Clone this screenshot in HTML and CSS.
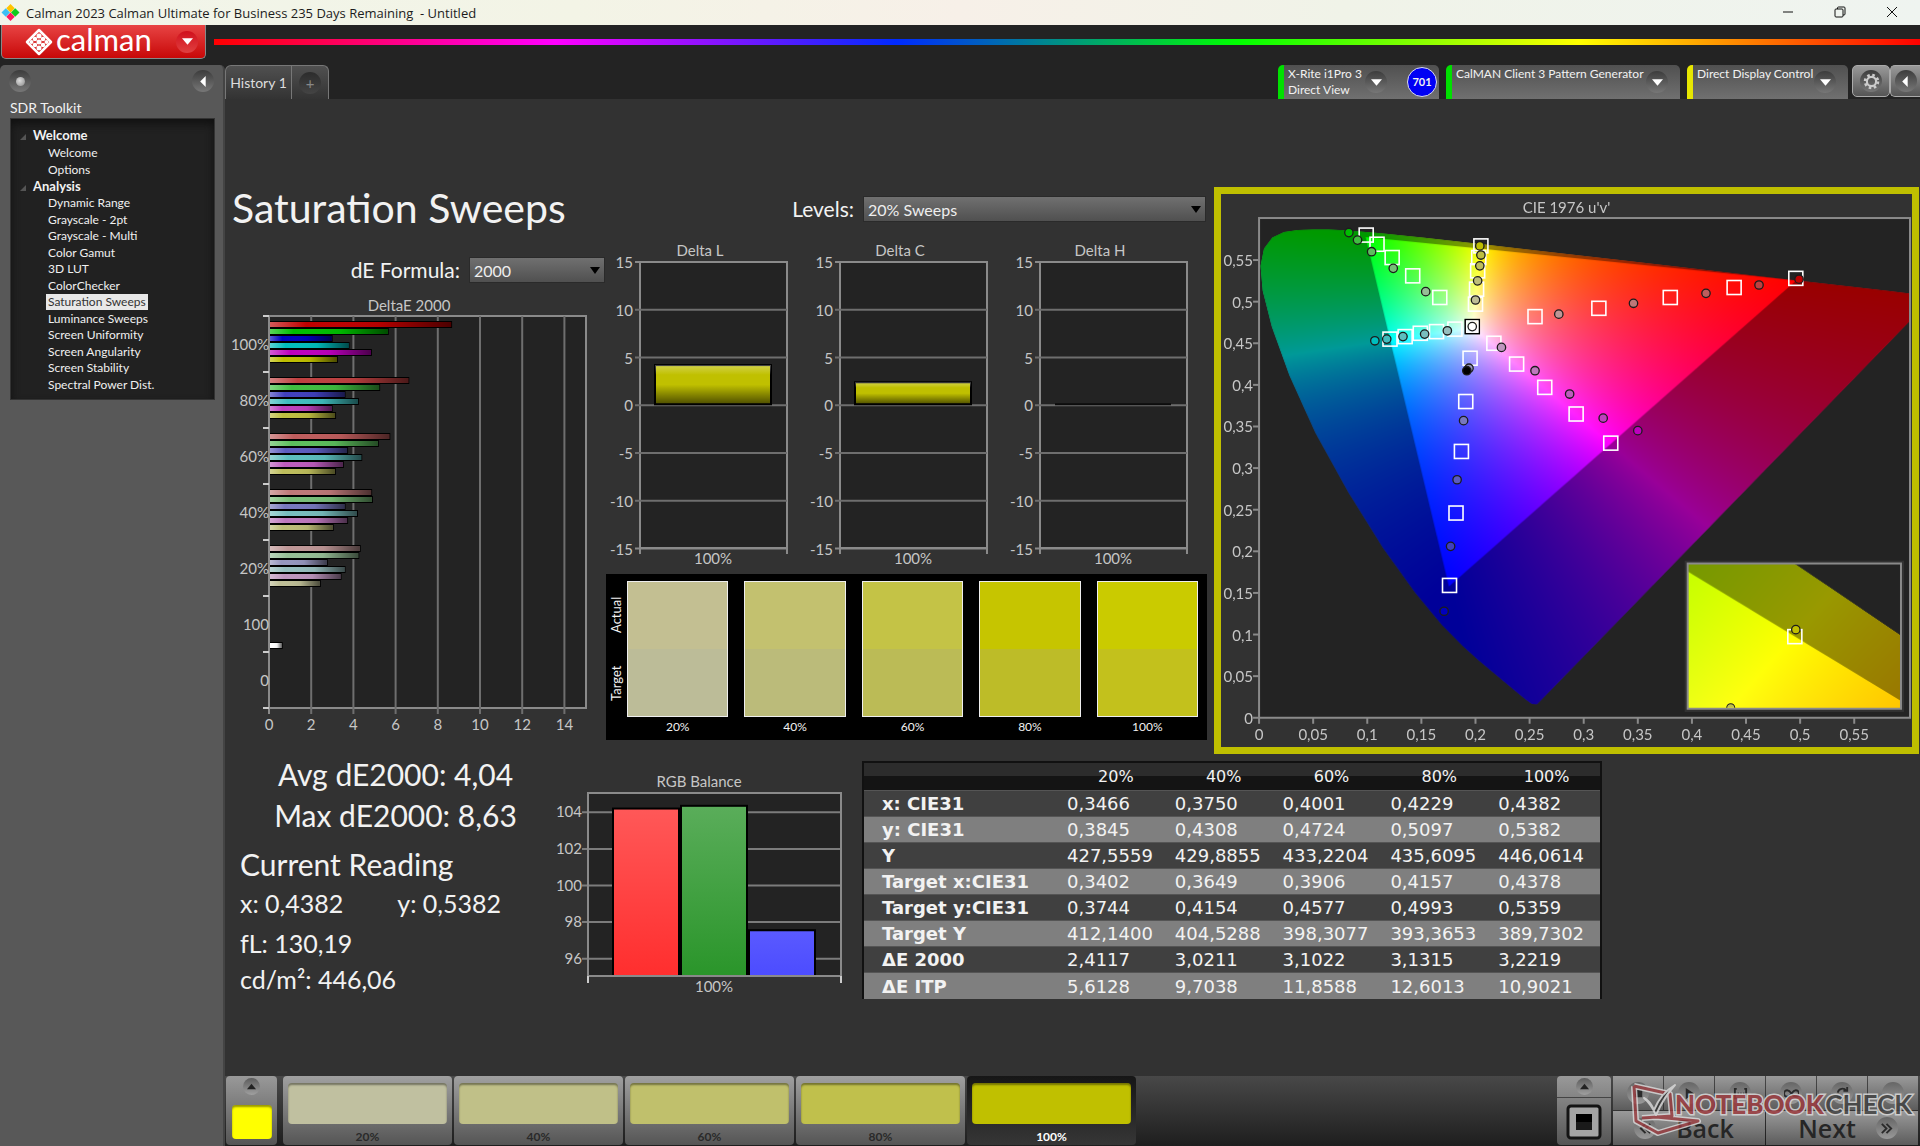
FILE: index.html
```html
<!DOCTYPE html>
<html lang="en">
<head>
    <meta charset="UTF-8">
    <meta name="viewport" content="width=device-width, initial-scale=1.0">
    <title>Calman 2023 - Untitled</title>
    <link rel="stylesheet" href="styles.css">
</head>
<body>

    <!-- Window title bar -->
    <div class="titlebar">
        <svg class="app-icon" viewBox="0 0 20 20">
            <path d="M10 1l4.500 4.500-4.500 4.500-4.500-4.500z" fill="#ffc400"/>
            <path d="M5 5.500l4.500 4.500-4.500 4.500-4.500-4.500z" fill="#3cc0f5"/>
            <path d="M15 5.500l4.500 4.500-4.500 4.500-4.500-4.500z" fill="#12cc1c"/>
            <path d="M10 10l4.500 4.500-4.500 4.500-4.500-4.500z" fill="#ff1a5e"/>
        </svg>
        <span>Calman 2023 Calman Ultimate for Business 235 Days Remaining &nbsp;- Untitled</span>
        <div class="window-buttons">
            <button aria-label="Minimize"><svg viewBox="0 0 12 12"><path d="M1 6h10"/></svg></button>
            <button aria-label="Restore"><svg viewBox="0 0 12 12"><rect x="1" y="3" width="8" height="8" rx="1"/><path d="M3.500 3V2q0-1 1-1H10q1 0 1 1v6q0 1-1 1H9"/></svg></button>
            <button aria-label="Close"><svg viewBox="0 0 12 12"><path d="M1 1l10 10M11 1L1 11"/></svg></button>
        </div>
    </div>

    <div class="header">
        <button class="logo">
            <svg class="logo-mark" viewBox="0 0 28 28">
                <path d="M14 2l12 12-12 12L2 14z" fill="none" stroke="#fff" stroke-width="2.500" stroke-linejoin="round"/>
                <g fill="#fff">
                    <circle cx="14" cy="8" r="2.500"/><circle cx="10" cy="11" r="2.300"/><circle cx="18" cy="11" r="2.300"/>
                    <circle cx="14" cy="14" r="2.500"/><circle cx="10" cy="17" r="2.300"/><circle cx="18" cy="17" r="2.300"/>
                    <circle cx="14" cy="20" r="2.500"/><circle cx="6.500" cy="14" r="2"/><circle cx="21.500" cy="14" r="2"/>
                </g>
            </svg>
            <span>calman</span>
            <i class="round red"><svg viewBox="0 0 10 10"><path d="M0 2h10L5 8z"/></svg></i>
        </button>
        <div class="rainbow"></div>
    </div>

    <div class="main">
        <!-- Workflow navigation -->
        <aside class="sidebar">
            <div class="sidebar-top">
                <button class="round" aria-label="Record"><i class="dot"></i></button>
                <button class="round" aria-label="Collapse"><svg viewBox="0 0 10 10"><path d="M7 0v10L2 5z"/></svg></button>
            </div>
            <h2>SDR Toolkit</h2>
            <nav class="tree">
                <h3>Welcome</h3>
                <ul class="two">
                    <li><a href="#">Welcome</a></li>
                    <li><a href="#">Options</a></li>
                </ul>
                <h3>Analysis</h3>
                <ul class="twelve">
                    <li><a href="#">Dynamic Range</a></li>
                    <li><a href="#">Grayscale - 2pt</a></li>
                    <li><a href="#">Grayscale - Multi</a></li>
                    <li><a href="#">Color Gamut</a></li>
                    <li><a href="#">3D LUT</a></li>
                    <li><a href="#">ColorChecker</a></li>
                    <li><a href="#" class="selected">Saturation Sweeps</a></li>
                    <li><a href="#">Luminance Sweeps</a></li>
                    <li><a href="#">Screen Uniformity</a></li>
                    <li><a href="#">Screen Angularity</a></li>
                    <li><a href="#">Screen Stability</a></li>
                    <li><a href="#">Spectral Power Dist.</a></li>
                </ul>
            </nav>
        </aside>

        <div class="workspace">
            <div class="topbar">
                <div class="tabs">
                    <button class="tab">History 1</button>
                    <button class="tab add" aria-label="Add tab"><i class="round dark">+</i></button>
                </div>
                <div class="devices">
                    <div class="device green meter">
                        <span>X-Rite i1Pro 3<br>Direct View</span>
                        <button class="round" aria-label="Meter menu"><svg viewBox="0 0 10 10"><path d="M0 2h10L5 8z"/></svg></button>
                        <b class="badge">701</b>
                    </div>
                    <div class="device green source">
                        <span>CalMAN Client 3 Pattern Generator</span>
                        <button class="round" aria-label="Source menu"><svg viewBox="0 0 10 10"><path d="M0 2h10L5 8z"/></svg></button>
                    </div>
                    <div class="device yellow display">
                        <span>Direct Display Control</span>
                        <button class="round" aria-label="Display menu"><svg viewBox="0 0 10 10"><path d="M0 2h10L5 8z"/></svg></button>
                    </div>
                    <button class="tool" aria-label="Settings">
                        <i class="round"><svg class="gear" viewBox="0 0 24 24">
                            <circle cx="12" cy="12" r="9" stroke-width="4" stroke-dasharray="3.500 3.570"/>
                            <circle cx="12" cy="12" r="6.500" stroke-width="3"/>
                        </svg></i>
                    </button>
                    <button class="tool last" aria-label="Collapse devices"><i class="round"><svg viewBox="0 0 10 10"><path d="M7 0v10L2 5z"/></svg></i></button>
                </div>
            </div>

            <div class="content">
                <div class="row upper">
                    <section class="col-de">
                        <h1>Saturation Sweeps</h1>
                        <div class="field formula">
                            <label for="formula">dE Formula:</label>
                            <div class="select"><select id="formula"><option>2000</option></select></div>
                        </div>
                        <svg id="deltaE" class="chart" viewBox="0 0 380 450"></svg>
                    </section>

                    <section class="col-mid">
                        <div class="field levels">
                            <label for="levels">Levels:</label>
                            <div class="select"><select id="levels"><option>20% Sweeps</option></select></div>
                        </div>
                        <div class="deltas">
                            <svg id="deltaL" class="chart" viewBox="0 0 200 333"></svg>
                            <svg id="deltaC" class="chart" viewBox="0 0 200 333"></svg>
                            <svg id="deltaH" class="chart" viewBox="0 0 200 333"></svg>
                        </div>
                        <div class="swatches">
                            <div class="sides"><span>Actual</span><span>Target</span></div>
                            <figure><div class="s20"></div><figcaption>20%</figcaption></figure>
                            <figure><div class="s40"></div><figcaption>40%</figcaption></figure>
                            <figure><div class="s60"></div><figcaption>60%</figcaption></figure>
                            <figure><div class="s80"></div><figcaption>80%</figcaption></figure>
                            <figure><div class="s100"></div><figcaption>100%</figcaption></figure>
                        </div>
                    </section>

                    <section class="cie">
                        <canvas id="gamut" width="690" height="552"></canvas>
                        <svg id="cie" class="chart" viewBox="0 0 690 552"></svg>
                    </section>
                </div>

                <div class="row lower">
                    <section class="readings">
                        <div class="stats">
                            <p>Avg dE2000: 4,04</p>
                            <p>Max dE2000: 8,63</p>
                        </div>
                        <h2>Current Reading</h2>
                        <div class="xy"><span>x: 0,4382</span><span>y: 0,5382</span></div>
                        <p class="value">fL: 130,19</p>
                        <p class="value">cd/m²: 446,06</p>
                    </section>

                    <section class="balance">
                        <svg id="rgb" class="chart" viewBox="0 0 314 240"></svg>
                    </section>

                    <section class="table-box">
                        <table>
                            <thead>
                                <tr><th></th><th>20%</th><th>40%</th><th>60%</th><th>80%</th><th>100%</th></tr>
                            </thead>
                            <tbody>
                                <tr><th>x: CIE31</th><td>0,3466</td><td>0,3750</td><td>0,4001</td><td>0,4229</td><td>0,4382</td></tr>
                                <tr><th>y: CIE31</th><td>0,3845</td><td>0,4308</td><td>0,4724</td><td>0,5097</td><td>0,5382</td></tr>
                                <tr><th>Y</th><td>427,5559</td><td>429,8855</td><td>433,2204</td><td>435,6095</td><td>446,0614</td></tr>
                                <tr><th>Target x:CIE31</th><td>0,3402</td><td>0,3649</td><td>0,3906</td><td>0,4157</td><td>0,4378</td></tr>
                                <tr><th>Target y:CIE31</th><td>0,3744</td><td>0,4154</td><td>0,4577</td><td>0,4993</td><td>0,5359</td></tr>
                                <tr><th>Target Y</th><td>412,1400</td><td>404,5288</td><td>398,3077</td><td>393,3653</td><td>389,7302</td></tr>
                                <tr><th>ΔE 2000</th><td>2,4117</td><td>3,0211</td><td>3,1022</td><td>3,1315</td><td>3,2219</td></tr>
                                <tr><th>ΔE ITP</th><td>5,6128</td><td>9,7038</td><td>11,8588</td><td>12,6013</td><td>10,9021</td></tr>
                            </tbody>
                        </table>
                    </section>
                </div>
            </div>

            <!-- Pattern buttons and read controls -->
            <div class="footer">
                <button class="current" aria-label="Current pattern">
                    <i class="round up"><svg viewBox="0 0 10 10"><path d="M0 8h10L5 2z"/></svg></i>
                    <span class="fill"></span>
                </button>
                <button class="pattern"><span class="fill p20"></span>20%</button>
                <button class="pattern"><span class="fill p40"></span>40%</button>
                <button class="pattern"><span class="fill p60"></span>60%</button>
                <button class="pattern"><span class="fill p80"></span>80%</button>
                <button class="pattern active"><span class="fill p100"></span>100%</button>

                <div class="controls">
                    <div class="stop-box">
                        <button class="stop-up" aria-label="Expand"><i class="round up"><svg viewBox="0 0 10 10"><path d="M0 8h10L5 2z"/></svg></i></button>
                        <button class="stop" aria-label="Stop">
                            <svg viewBox="0 0 36 36"><rect x="2" y="2" width="32" height="32" rx="3" fill="#a4a4a4" stroke="#141414" stroke-width="3"/><rect x="10" y="10" width="16" height="16" fill="#000"/><path d="M10 18h16v8H10z" fill="#1a1a1a"/></svg>
                        </button>
                    </div>
                    <div class="transport">
                        <button aria-label="Read"><i class="round"><svg viewBox="0 0 16 16"><path d="M4 4h8v8H4z"/></svg></i></button>
                        <button aria-label="Play"><i class="round"><svg viewBox="0 0 16 16"><path d="M4 2l9 6-9 6z"/></svg></i></button>
                        <button aria-label="Range"><i class="round"><svg viewBox="0 0 16 16"><path class="line" d="M4 3H2v10h2M12 3h2v10h-2M5 8h1M8 8h1M11 8h1"/></svg></i></button>
                        <button aria-label="Continuous"><i class="round"><svg viewBox="0 0 16 16"><path class="line" d="M8 8C6 5 5 4.500 3.500 4.500a3.500 3.500 0 0 0 0 7C5 11.500 6 11 8 8s3-3.500 4.500-3.500a3.500 3.500 0 0 1 0 7C11 11.500 10 11 8 8z"/></svg></i></button>
                        <button aria-label="Refresh"><i class="round"><svg viewBox="0 0 16 16"><path class="line" d="M3 7a5 5 0 0 1 9-2M13 9a5 5 0 0 1-9 2M13 1v4H9M3 15v-4h4"/></svg></i></button>
                        <button aria-label="More"><i class="round"></i></button>
                        <button class="nav-button"><i class="round"><svg viewBox="0 0 16 16"><path class="line" d="M8 3L3 8l5 5M13 3L8 8l5 5"/></svg></i>Back</button>
                        <button class="nav-button next">Next<i class="round"><svg viewBox="0 0 16 16"><path class="line" d="M3 3l5 5-5 5M8 3l5 5-5 5"/></svg></i></button>
                    </div>
                    <svg class="watermark" viewBox="0 0 290 58">
                        <g fill="none" stroke-linejoin="round" opacity=".8">
                            <path d="M6 5L8 40 30 52 70 40 28 36M6 5L42 13 44 35 14 37" stroke="#ddd" stroke-width="6"/>
                            <path d="M6 5L8 40 30 52 70 40 28 36M6 5L42 13 44 35 14 37" stroke="#9c3c40" stroke-width="3"/>
                            <path d="M16 17Q22 20 26 29 33 12 47 4 36 16 28 34 23 23 16 17z" stroke="#ddd" stroke-width="2" fill="#333"/>
                        </g>
                        <text x="47" y="33" class="wm-red">NOTEBOOK</text>
                        <text x="284" y="33" text-anchor="end" class="wm-gray">CHECK</text>
                    </svg>
                </div>
            </div>
        </div>
    </div>

    <script src="app.js"></script>
</body>
</html>
```

FILE: styles.css
```css
* {
    box-sizing: border-box;
}

body {
    margin: 0;
    min-height: 100vh;
    display: flex;
    flex-direction: column;
    background: #232323;
    color: #f2f2f2;
    font-family: Lato, "Liberation Sans", sans-serif;
    font-size: 12px;
}

h1, h2, h3, p, ul, figure {
    margin: 0;
    padding: 0;
    font-weight: normal;
}

button {
    border: 0;
    padding: 0;
    margin: 0;
    background: none;
    color: inherit;
    font: inherit;
}

/* Title bar */
.titlebar {
    display: flex;
    align-items: center;
    height: 25px;
    padding-left: 1px;
    background: linear-gradient(90deg, #f1f5ea, #f3f4e6 30%, #f7f0e8 50%, #f0f3e8 70%, #eff4f0);
    color: #1c1c1c;
    font-family: "Open Sans", sans-serif;
    font-size: 13px;
}

.app-icon {
    width: 19px;
    height: 19px;
    margin-right: 6px;
}

.window-buttons {
    display: flex;
    margin-left: auto;
    padding-right: 2px;
}

.window-buttons button {
    width: 52px;
    height: 24px;
}

.window-buttons svg {
    width: 12px;
    height: 12px;
    fill: none;
    stroke: #111;
}

/* Logo and rainbow */
.header {
    display: flex;
    align-items: flex-start;
    height: 40px;
    padding-left: 1px;
    gap: 8px;
}

.logo {
    display: flex;
    align-items: center;
    width: 205px;
    height: 34px;
    padding: 0 7px 0 23px;
    border: 1px solid #888;
    border-top: 0;
    border-radius: 0 0 5px 5px;
    background: linear-gradient(#e84444, #c80808);
    color: #fff;
    font-size: 31px;
    line-height: 30px;
}

.logo span {
    margin-top: -6px;
}

.logo-mark {
    width: 28px;
    height: 28px;
    margin-right: 3px;
}

.logo .round {
    margin-left: auto;
}

.rainbow {
    flex: 1;
    height: 6px;
    margin-top: 14px;
    background: linear-gradient(90deg, #f00, #f0f 20%, #002aff 40%, #0f0 60%, #ff0 80%, #f00);
}

/* Small round buttons */
.round {
    display: flex;
    align-items: center;
    justify-content: center;
    flex: none;
    width: 22px;
    height: 22px;
    border-radius: 50%;
    background: linear-gradient(#3c3c3c, #777);
    font-style: normal;
}

.round svg {
    width: 11px;
    height: 11px;
    fill: #fff;
}

.round.red {
    background: linear-gradient(#d0101c, #e04040);
}

.round.dark {
    background: linear-gradient(#2c2c2c, #444);
    color: #888;
    font-size: 15px;
}

.round.up {
    width: 17px;
    height: 17px;
    background: linear-gradient(#5c5c5c, #a0a0a0);
}

.round.up svg {
    width: 9px;
    height: 9px;
    fill: #222;
}

.dot {
    width: 9px;
    height: 9px;
    border-radius: 50%;
    background: radial-gradient(circle at 40% 40%, #ddd, #888);
}

/* Sidebar */
.main {
    flex: 1;
    display: flex;
}

.sidebar {
    width: 225px;
    flex: none;
    border-radius: 5px 5px 0 0;
    border-right: 2px solid #444;
    background: #585858;
}

.sidebar-top {
    display: flex;
    justify-content: space-between;
    padding: 5px 9px 0 9px;
}

.sidebar h2 {
    padding: 6px 10px 0;
    font-size: 14px;
    line-height: 20px;
}

.tree {
    margin: 0 8px 0 10px;
    height: 282px;
    padding: 8px 0 0 22px;
    border: 1px solid #333;
    background: #212121;
    box-shadow: inset 0 5px 8px #111;
}

.tree h3 {
    position: relative;
    font-size: 13px;
    font-weight: bold;
    line-height: 17px;
}

.tree h3::before {
    content: "";
    position: absolute;
    left: -13px;
    top: 7px;
    border: 3px solid transparent;
    border-right-color: #555;
    border-bottom-color: #555;
}

.tree ul {
    display: grid;
    grid-auto-rows: 1fr;
    list-style: none;
    padding-left: 13px;
}

.tree .two {
    height: 34px;
}

.tree .twelve {
    height: 198px;
}

.tree li {
    display: flex;
    align-items: center;
}

.tree a {
    padding: 0 2px;
    color: #f0f0f0;
    line-height: 16px;
    text-decoration: none;
}

.tree a.selected {
    background: #e8e8e8;
    color: #333;
}

/* Tabs and devices */
.workspace {
    flex: 1;
    min-width: 0;
    display: flex;
    flex-direction: column;
    background: #323232;
}

.topbar {
    display: flex;
    justify-content: space-between;
    height: 34px;
    background: #232323;
}

.tabs {
    display: flex;
    border: 1px solid #777;
    border-bottom: 0;
    border-radius: 6px 6px 0 0;
    background: linear-gradient(#505050, #333);
}

.tab {
    width: 65px;
    color: #ddd;
    font-size: 14px;
    white-space: nowrap;
}

.tab.add {
    display: flex;
    align-items: center;
    justify-content: center;
    width: 37px;
    border-left: 1px solid #777;
}

.devices {
    display: flex;
}

.device {
    display: flex;
    margin-right: 7px;
    padding: 1px 12px 0 4px;
    border-left: 6px solid #00e000;
    border-radius: 5px 5px 0 0;
    background: linear-gradient(#505050, #707070);
    line-height: 16px;
    white-space: nowrap;
}

.device.yellow {
    margin-right: 4px;
    border-left-color: #e6e600;
}

.device .round {
    margin: 5px 0 0 auto;
}

.meter {
    width: 161px;
    padding-right: 2px;
}

.source {
    width: 234px;
}

.display {
    width: 161px;
}

.badge {
    display: flex;
    align-items: center;
    justify-content: center;
    width: 30px;
    height: 30px;
    margin: 1px 0 0 20px;
    border: 1px solid #dde;
    border-radius: 50%;
    background: #0000f4;
    font-size: 11px;
}

.tool {
    display: flex;
    align-items: center;
    justify-content: center;
    width: 38px;
    height: 32px;
    border: 1px solid #aaa;
    border-radius: 5px;
    background: linear-gradient(#999, #555);
}

.tool.last {
    width: 30px;
    border-right: 0;
    border-radius: 5px 0 0 5px;
}

.tool .gear {
    width: 17px;
    height: 17px;
    fill: none;
    stroke: #ccc;
}

/* Content */
.content {
    flex: 1;
    padding: 88px 1px 0 0;
}

.row {
    display: grid;
}

.upper {
    grid-template-columns: 380fr 609fr 705fr;
}

.lower {
    grid-template-columns: 316fr 321fr 740fr 317fr;
}

.row > section {
    min-width: 0;
}

.chart {
    display: block;
    width: 100%;
}

.chart text {
    fill: #c6c6c6;
    font-size: 15px;
}

h1 {
    padding-left: 7px;
    font-size: 41px;
    line-height: 42px;
    white-space: nowrap;
}

.field {
    display: flex;
    align-items: center;
    justify-content: flex-end;
    gap: 9px;
    font-size: 21px;
    line-height: 26px;
}

.formula {
    margin: 28px 0 7px;
}

.formula .select {
    width: 136px;
}

.levels {
    margin: 9px 8px 15px 0;
}

.levels .select {
    width: 343px;
}

.select {
    position: relative;
}

.select::after {
    content: "";
    position: absolute;
    right: 5px;
    top: 10px;
    border: 5px solid transparent;
    border-top: 7px solid #000;
    border-bottom: 0;
}

select {
    appearance: none;
    display: block;
    width: 100%;
    height: 26px;
    padding: 0 4px;
    border: 1px solid #2a2a2a;
    border-radius: 0;
    background: linear-gradient(#707070, #505050);
    color: #eee;
    font-family: inherit;
    font-size: 16px;
}

.deltas {
    display: grid;
    grid-template-columns: repeat(3, 1fr);
    margin-right: 9px;
}

.swatches {
    display: flex;
    gap: 16px;
    margin: 4px 7px 0 1px;
    padding: 7px 9px 0 0;
    height: 166px;
    background: #000;
    font-size: 12px;
    text-align: center;
}

.swatches figure {
    flex: 1;
}

.swatches figure div {
    height: 136px;
    margin-bottom: 2px;
    border: 1px solid #eee;
}

.sides {
    display: flex;
    justify-content: space-around;
    width: 21px;
    height: 136px;
    margin-right: -16px;
    writing-mode: vertical-rl;
    transform: rotate(180deg);
    flex-direction: row-reverse;
    font-size: 13px;
    line-height: 20px;
}

.s20 { background: linear-gradient(#c3bf92 50%, #bcbc98 50%); }
.s40 { background: linear-gradient(#c3c16f 50%, #bbbb7a 50%); }
.s60 { background: linear-gradient(#c4c346 50%, #bbbb56 50%); }
.s80 { background: linear-gradient(#c6c500 50%, #bdbc28 50%); }
.s100 { background: linear-gradient(#cacb00 50%, #c3c11c 50%); }

/* CIE diagram, canvas under the svg */
.cie {
    display: grid;
    align-self: start;
    border: 7px solid #bfbf00;
}

.cie canvas,
.cie svg {
    grid-area: 1 / 1;
    width: 100%;
}

/* Readings */
.readings {
    padding: 0 0 0 15px;
    font-size: 25px;
    line-height: 36px;
    white-space: nowrap;
}

.stats {
    padding: 0 0 7px 10px;
    text-align: center;
    font-size: 30px;
    line-height: 41px;
}

.readings h2 {
    font-size: 30px;
    line-height: 42px;
}

.xy {
    display: flex;
    gap: 54px;
    padding-bottom: 4px;
}

.balance {
    padding-right: 7px;
}

/* Table */
.table-box {
    padding: 7px 0 0;
}

table {
    width: 100%;
    table-layout: fixed;
    border-collapse: collapse;
    border: 2px solid #111;
    border-bottom: 0;
    font-family: "DejaVu Sans", sans-serif;
    font-size: 18px;
    line-height: 25px;
    white-space: nowrap;
}

th, td {
    padding: 0 0 0 5px;
    text-align: left;
    font-weight: normal;
}

th:first-child {
    width: 199px;
    padding-left: 18px;
    font-weight: bold;
}

thead th {
    height: 29px;
    padding: 0;
    text-align: center;
    font-size: 16px;
}

thead tr {
    background: linear-gradient(#2c2c2c 50%, #141414 50%);
}

tbody tr {
    height: 26px;
    border-top: 1px solid #555;
    background: #404040;
}

tbody tr:nth-child(even) {
    background: #7f7f7f;
}

/* Footer */
.footer {
    display: flex;
    height: 70px;
    padding: 0 2px 1px 1px;
    gap: 2px;
    background: linear-gradient(#484848, #1e1e1e);
}

.current {
    display: flex;
    flex-direction: column;
    align-items: center;
    justify-content: space-between;
    width: 51px;
    margin-right: 4px;
    padding: 2px 5px 6px;
    border-radius: 4px;
    background: linear-gradient(#999, #555);
}

.fill {
    display: block;
    border-radius: 4px;
    box-shadow: inset 0 2px 2px rgba(0, 0, 0, 0.4);
}

.current .fill {
    width: 40px;
    height: 34px;
    background: #ff0;
}

.pattern {
    width: 169px;
    padding: 5px 5px 0;
    border-radius: 4px;
    background: linear-gradient(#a0a0a0, #555);
    color: #2a2a2a;
    font-size: 12px;
    font-weight: bold;
}

.pattern .fill {
    height: 41px;
    margin-bottom: 5px;
}

.pattern.active {
    background: linear-gradient(#161616, #363636);
    color: #fff;
}

.p20 { background: #c0c0a0; }
.p40 { background: #c0c088; }
.p60 { background: #c0c06c; }
.p80 { background: #c0c04c; }
.p100 { background: #c0c000; }

.controls {
    position: relative;
    display: flex;
    margin-left: auto;
    gap: 2px;
}

.stop-box {
    width: 54px;
    border-radius: 4px;
    background: linear-gradient(#999, #555);
}

.stop-box button {
    display: flex;
    align-items: center;
    justify-content: center;
    width: 100%;
    height: 21px;
}

.stop-box .stop {
    height: 48px;
    border-top: 1px solid #444;
}

.stop svg {
    width: 36px;
    height: 36px;
}

.transport {
    display: grid;
    grid-template-columns: repeat(6, 50px);
    grid-template-rows: 34px 34px;
    gap: 1px;
}

.transport button {
    display: flex;
    align-items: center;
    justify-content: center;
    background: linear-gradient(#9a9a9a, #5c5c5c);
}

.transport svg {
    width: 15px;
    height: 15px;
    fill: #2a2a2a;
}

.transport .round {
    background: linear-gradient(#666, #999);
}

.transport .line {
    fill: none;
    stroke: #2a2a2a;
    stroke-width: 2;
}

.transport .nav-button {
    grid-column: span 3;
    gap: 20px;
    padding-right: 10px;
    color: #262626;
    font-family: "Open Sans", sans-serif;
    font-size: 25px;
    font-weight: 600;
    line-height: 34px;
}

.transport .next {
    padding: 0 0 0 12px;
}

.watermark {
    position: absolute;
    right: 0;
    top: 5px;
    width: 290px;
    height: 58px;
}

.watermark text {
    font-size: 26px;
    font-weight: 900;
    stroke: #d8d8d8;
    stroke-width: 3;
    paint-order: stroke;
    opacity: 0.85;
}

.watermark .wm-red {
    fill: #9c3c40;
}

.watermark .wm-gray {
    fill: #444;
    font-weight: bold;
}
```

FILE: app.js
```javascript
const NS = 'http://www.w3.org/2000/svg';
const GRID = '#8a8a8a';

// Append an svg element with attributes and optional text
function add(parent, tag, attrs, text) {
    const el = document.createElementNS(NS, tag);
    for (const key in attrs) el.setAttribute(key, attrs[key]);
    if (text !== undefined) el.textContent = text;
    parent.appendChild(el);
    return el;
}

function line(svg, x1, y1, x2, y2, color) {
    add(svg, 'line', { x1, y1, x2, y2, stroke: color || GRID, 'stroke-width': 2 });
}

function label(svg, x, y, text, anchor) {
    add(svg, 'text', { x, y, 'text-anchor': anchor || 'middle' }, text);
}

function gradient(svg, id, vertical, stops) {
    const g = add(svg, 'linearGradient', vertical ? { id, x2: 0, y2: 1 } : { id });
    stops.forEach(s => add(g, 'stop', { offset: s[0], 'stop-color': s[1], 'stop-opacity': s[2] }));
}

const LEVELS = ['100%', '80%', '60%', '40%', '20%'];
const LOW = [0, 64, 92, 120, 150];

// Colour of one hue at a saturation level
function shade(mask, level) {
    return 'rgb(' + [...mask].map(c => c === '1' ? 190 : LOW[level]).join(',') + ')';
}

const HUES = ['100', '010', '001', '011', '101', '110'];

// DeltaE bars per saturation level, in the order of HUES
function drawDeltaE() {
    const svg = document.getElementById('deltaE');
    const data = [
        [8.63, 5.63, 2.97, 3.77, 4.83, 3.22],
        [6.6, 5.22, 3.58, 4.21, 2.97, 3.13],
        [5.7, 5.16, 3.7, 4.37, 3.5, 3.12],
        [4.84, 4.88, 3.58, 4.17, 3.7, 3.02],
        [4.3, 4.23, 2.74, 3.58, 3.39, 2.41]
    ];
    const left = 44, top = 26, unit = 21.1, step = 56;
    gradient(svg, 'barShade', false, [[0, '#fff', 0.35], [0.2, '#fff', 0], [0.6, '#000', 0.05], [1, '#000', 0.6]]);
    label(svg, 184, 21, 'DeltaE 2000');
    add(svg, 'rect', { x: left, y: top, width: 317, height: 392, fill: '#232323', stroke: GRID, 'stroke-width': 2 });
    for (let v = 0; v <= 14; v += 2) {
        const x = left + v * unit;
        line(svg, x, top, x, top + 398, v ? '#6e6e6e' : GRID);
        label(svg, x, 440, v);
    }
    [...LEVELS, '100', '0'].forEach((t, i) => {
        label(svg, left, top + 34 + i * step, t, 'end');
        line(svg, left - 6, top + i * step, left, top + i * step, '#ccc');
    });
    line(svg, left - 6, top + 392, left, top + 392, '#ccc');
    const bar = (y, value, fill) => {
        add(svg, 'rect', { x: left + 1, y, width: value * unit, height: 7, fill: '#000' });
        const box = { x: left + 1, y: y + 1, width: value * unit - 1, height: 5 };
        add(svg, 'rect', { ...box, fill });
        add(svg, 'rect', { ...box, fill: 'url(#barShade)' });
    };
    data.forEach((row, i) => row.forEach((v, j) => bar(top + 5 + i * step + j * 7, v, shade(HUES[j], i))));
    bar(top + 326, 0.6, '#fff');
}

function drawDelta(id, title, value) {
    const svg = document.getElementById(id);
    const left = 35, top = 25, width = 147, unit = 9.55;
    gradient(svg, id + 'Shade', true, [[0, '#fff', 0.3], [0.25, '#fff', 0], [0.5, '#000', 0], [1, '#000', 0.6]]);
    label(svg, 95, 19, title);
    label(svg, 108, 327, '100%');
    add(svg, 'rect', { x: left, y: top, width, height: 286, fill: '#232323', stroke: GRID, 'stroke-width': 2 });
    for (let v = 15; v >= -15; v -= 5) {
        const y = top + (15 - v) * unit;
        line(svg, left - 5, y, left + width, y, Math.abs(v) === 15 ? GRID : '#6e6e6e');
        label(svg, left - 7, y + 6, v, 'end');
    }
    line(svg, left, 311, left, 317);
    line(svg, left + width, 311, left + width, 317);
    const h = value * unit;
    const box = { x: left + 15, y: top + 15 * unit - h - 1, width: 116, height: h };
    if (h < 1) {
        line(svg, box.x, box.y, box.x + box.width, box.y, '#0c0c0c');
        return;
    }
    add(svg, 'rect', { ...box, fill: '#c0c000', stroke: '#000', 'stroke-width': 2 });
    add(svg, 'rect', { ...box, fill: `url(#${id}Shade)` });
}

function drawRgb() {
    const svg = document.getElementById('rgb');
    const left = 47, top = 39, unit = 18.3;
    label(svg, 158, 33, 'RGB Balance');
    label(svg, 173, 238, '100%');
    add(svg, 'rect', { x: left, y: top, width: 253, height: 183, fill: '#232323' });
    for (let v = 104; v >= 96; v -= 2) {
        const y = top + (105 - v) * unit + 1;
        line(svg, left - 6, y, left + 253, y, '#7c7c7c');
        label(svg, left - 6, y + 5, v, 'end');
    }
    const bars = [[104.15, '#ff5858', '#ff2e2e'], [104.3, '#5aad5a', '#2a952a'], [97.5, '#5a5aff', '#4c4cff']];
    bars.forEach(([v, c1, c2], i) => {
        gradient(svg, 'rgb' + i, true, [[0, c1, 1], [1, c2, 1]]);
        const h = (v - 95) * unit;
        add(svg, 'rect', { x: 72 + i * 68, y: top + 183 - h, width: 66, height: h, fill: `url(#rgb${i})`, stroke: '#000', 'stroke-width': 2 });
    });
    add(svg, 'rect', { x: left, y: top, width: 253, height: 183, fill: 'none', stroke: GRID, 'stroke-width': 2 });
    line(svg, left, 222, left, 229, '#ccc');
    line(svg, left + 253, 222, left + 253, 229, '#ccc');
}

// CIE 1931 spectral locus (x, y)
const LOCUS = [
    [.1741, .0050], [.1714, .0051], [.1689, .0069], [.1644, .0109], [.1611, .0138], [.1566, .0177],
    [.1510, .0227], [.1440, .0297], [.1355, .0399], [.1241, .0578], [.1096, .0868], [.0913, .1327],
    [.0687, .2007], [.0454, .2950], [.0235, .4127], [.0082, .5384], [.0039, .6548], [.0139, .7502],
    [.0389, .8120], [.0743, .8338], [.1142, .8262], [.1547, .8059], [.1929, .7816], [.2296, .7543],
    [.3016, .6923], [.3731, .6245], [.4441, .5547], [.5125, .4866], [.5752, .4242], [.6270, .3725],
    [.6658, .3340], [.6915, .3083], [.7190, .2809], [.7347, .2653]
];
const P3 = [[.680, .320], [.265, .690], [.150, .060]];

function toUv([x, y]) {
    const d = -2 * x + 12 * y + 3;
    return [4 * x / d, 9 * y / d];
}

function toXy([u, v]) {
    const d = 6 * u - 16 * v + 12;
    return [9 * u / d, 4 * v / d];
}

// Brightest display colour of a chromaticity
function colorAt([x, y]) {
    const X = x / y, Z = (1 - x - y) / y;
    const rgb = [
        2.4935 * X - 0.9314 - 0.4027 * Z,
        -0.8295 * X + 1.7627 + 0.0236 * Z,
        0.0358 * X - 0.0762 + 0.9569 * Z
    ].map(c => Math.max(c, 0));
    const max = Math.max(...rgb);
    return rgb.map(c => 255 * c / max);
}

// box is the plot on the canvas, view the chromaticity range it shows
function paintGamut(ctx, box, view, isUv) {
    const w = box.w, h = box.h;
    const image = new ImageData(w, h);
    for (let j = 0; j < h; j++) {
        for (let i = 0; i < w; i++) {
            const p = [view.x + (i + 0.5) / w * view.w, view.y + (1 - (j + 0.5) / h) * view.h];
            const c = colorAt(isUv ? toXy(p) : p);
            image.data.set([c[0], c[1], c[2], 255], (j * w + i) * 4);
        }
    }
    const layer = document.createElement('canvas');
    layer.width = w;
    layer.height = h;
    layer.getContext('2d').putImageData(image, 0, 0);

    const trace = (path, points) => {
        points.forEach((pt, i) => {
            const p = isUv ? toUv(pt) : pt;
            const x = box.x + (p[0] - view.x) / view.w * w;
            const y = box.y + h - (p[1] - view.y) / view.h * h;
            i ? path.lineTo(x, y) : path.moveTo(x, y);
        });
        path.closePath();
    };
    const locus = new Path2D();
    trace(locus, LOCUS);
    const outside = new Path2D();
    trace(outside, LOCUS);
    trace(outside, P3);

    ctx.save();
    ctx.fillStyle = '#232323';
    ctx.fillRect(box.x, box.y, w, h);
    ctx.beginPath();
    ctx.rect(box.x, box.y, w, h);
    ctx.clip();
    ctx.clip(locus);
    ctx.drawImage(layer, box.x, box.y);
    ctx.fillStyle = 'rgba(0, 0, 0, 0.4)';
    ctx.fill(outside, 'evenodd');
    ctx.restore();
}

// u', v' of the targets and the measured points, 100% to 20%
const TARGETS = {
    '010': [[.099, .580], [.109, .569], [.123, .553], [.142, .531], [.167, .505]],
    '110': [[.205, .567], [.203, .553], [.202, .537], [.201, .515], [.200, .497]],
    '100': [[.496, .528], [.439, .517], [.380, .505], [.314, .492], [.255, .482]],
    '101': [[.325, .330], [.293, .365], [.264, .397], [.238, .425], [.217, .450]],
    '001': [[.176, .159], [.182, .246], [.187, .320], [.191, .380], [.195, .432]],
    '011': [[.121, .455], [.135, .458], [.149, .462], [.164, .464], [.181, .467]]
};
const MEASURED = {
    '010': [[.083, .583], [.091, .574], [.104, .560], [.124, .540], [.154, .512]],
    '110': [[.204, .567], [.205, .556], [.204, .543], [.202, .525], [.200, .502]],
    '100': [[.499, .527], [.462, .520], [.413, .510], [.346, .498], [.277, .485]],
    '101': [[.350, .345], [.318, .360], [.287, .389], [.255, .417], [.224, .445]],
    '001': [[.171, .128], [.177, .206], [.183, .286], [.189, .357], [.194, .420]],
    '011': [[.107, .453], [.118, .455], [.133, .458], [.153, .461], [.174, .465]]
};

function drawCie() {
    const ctx = document.getElementById('gamut').getContext('2d');
    const svg = document.getElementById('cie');
    const box = { x: 38, y: 24, w: 650, h: 499 };
    const inset = { x: 466, y: 369, w: 213, h: 145 };
    paintGamut(ctx, box, { x: 0, y: 0, w: 0.6015, h: 0.6005 }, true);
    ctx.fillStyle = '#323232';
    ctx.fillRect(inset.x - 3, inset.y - 3, inset.w + 6, inset.h + 6);
    paintGamut(ctx, inset, { x: 0.4128, y: 0.5109, w: 0.05, h: 0.05 }, false);

    label(svg, 345, 19, "CIE 1976 u'v'");
    add(svg, 'rect', { x: box.x, y: box.y, width: box.w, height: box.h, fill: 'none', stroke: GRID, 'stroke-width': 2 });
    add(svg, 'rect', { x: inset.x, y: inset.y, width: inset.w, height: inset.h, fill: 'none', stroke: GRID, 'stroke-width': 2 });
    const px = u => box.x + u * 1080.6;
    const py = v => box.y + box.h - v * 831;
    for (let i = 0; i <= 11; i++) {
        const v = i * 0.05;
        const text = String(+v.toFixed(2)).replace('.', ',');
        line(svg, px(v), box.y + box.h, px(v), box.y + box.h + 6);
        label(svg, px(v), 545, text);
        line(svg, box.x - 6, py(v), box.x, py(v));
        label(svg, box.x - 6, py(v) + 6, text, 'end');
    }
    const square = (x, y, color, size) => {
        const s = size || 14;
        add(svg, 'rect', { x: x - s / 2, y: y - s / 2, width: s, height: s, fill: 'none', stroke: color || '#fff', 'stroke-width': 1.6 });
    };
    const dot = (x, y, fill) =>
        add(svg, 'circle', { cx: x, cy: y, r: 4.2, fill, stroke: '#1c1c1c', 'stroke-width': 1.3 });
    for (const hue in TARGETS) TARGETS[hue].forEach(p => square(px(p[0]), py(p[1])));
    square(px(.197), py(.470), '#000');
    square(px(.197), py(.470), '#fff', 11);
    for (const hue in MEASURED) MEASURED[hue].forEach((p, i) => dot(px(p[0]), py(p[1]), shade(hue, i)));
    dot(px(.192), py(.417), '#000');
    dot(px(.197), py(.470), '#fff');

    square(inset.x + 107, inset.y + 73);
    dot(inset.x + 108, inset.y + 66, '#c0c000');
    add(svg, 'path', { d: `M${inset.x + 39} ${inset.y + 144}a4 4 0 0 1 8 0`, fill: '#c0c04c', stroke: '#1c1c1c' });
}

drawDeltaE();
drawDelta('deltaL', 'Delta L', 4.1);
drawDelta('deltaC', 'Delta C', 2.3);
drawDelta('deltaH', 'Delta H', 0);
drawRgb();
drawCie();
```
